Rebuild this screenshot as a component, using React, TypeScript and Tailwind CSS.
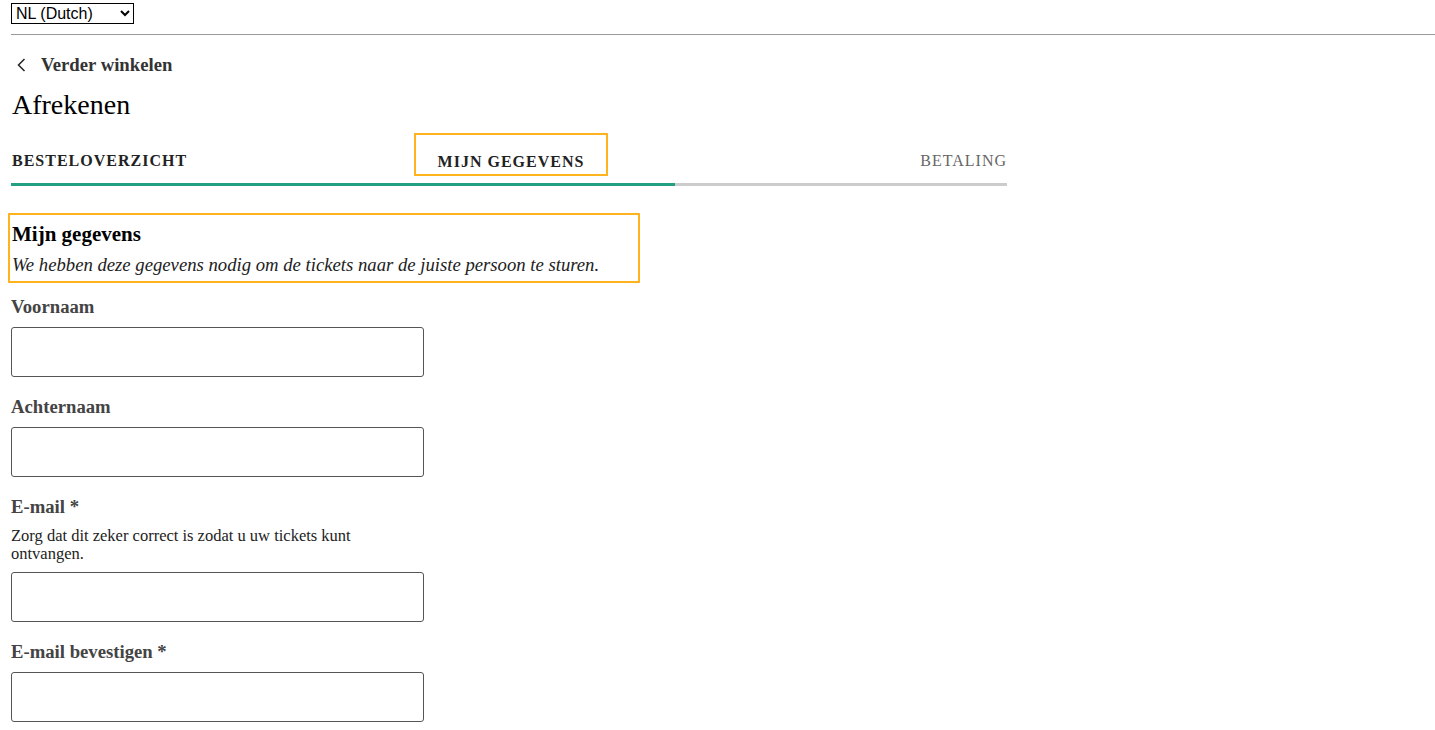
import React from "react";

const serif = { fontFamily: '"Liberation Serif", "Times New Roman", serif' };

function Field({ label, help }: { label: string; help?: string }) {
  return (
    <div className="flex flex-col">
      <label className="text-[18.7px] font-bold text-[#444] leading-[22px]">{label}</label>
      {help ? (
        <p className="mt-[9px] w-[413px] text-[16.5px] leading-[18px] text-[#222]">{help}</p>
      ) : null}
      <input
        type="text"
        className="mt-[9px] h-[50px] w-[413px] rounded-[3px] border border-[#555] bg-white"
      />
    </div>
  );
}

export default function App() {
  return (
    <div className="min-h-[730px] bg-white text-black" style={serif}>
      <div className="flex h-[24px] items-start pl-[11px] pt-[3px]">
        <select
          className="h-[21px] w-[123px] border border-black bg-white pl-0 text-[16px] leading-[19px] text-black"
          style={{ fontFamily: '"Liberation Sans", Arial, sans-serif' }}
          defaultValue="nl"
        >
          <option value="nl">NL (Dutch)</option>
        </select>
      </div>
      <div className="ml-[11px] mt-[10px] h-px bg-[#999]" />

      <div className="pl-[11px]">
        <div className="mt-[18px] flex h-[24px] items-center">
          <svg width="12" height="14" viewBox="0 0 12 14" className="ml-[5px]">
            <path d="M8.5 1 L2.5 7 L8.5 13" fill="none" stroke="#222" strokeWidth="1.5" />
          </svg>
          <span className="ml-[13px] text-[18.7px] font-bold leading-[24px] text-[#333]">Verder winkelen</span>
        </div>
        <h1 className="mt-[12px] pl-px text-[28px] font-normal leading-[32px]">Afrekenen</h1>

        <div className="w-[996px]">
          <div className="mt-[12px] flex h-[43px] items-center justify-between text-[16px] tracking-[1px]">
            <div className="w-[403px] pl-px pt-[12px] font-bold text-[#222]">BESTELOVERZICHT</div>
            <div className="flex h-[43px] w-[194px] items-center justify-center border-2 border-[#ffb31f] pt-[14px] font-bold text-[#222]">
              MIJN GEGEVENS
            </div>
            <div className="flex-1 pt-[12px] text-right font-normal text-[#666]">BETALING</div>
          </div>
          <div className="mt-[7px] flex h-[3px]">
            <div className="w-[664px] bg-[#22a082]" />
            <div className="flex-1 bg-[#cccccc]" />
          </div>
        </div>
      </div>

      <div className="ml-[8px] mt-[27px] h-[70px] w-[632px] border-2 border-[#ffb31f] px-[2px] pt-[7px]">
        <h2 className="text-[21px] font-bold leading-[24px]">Mijn gegevens</h2>
        <p className="mt-[8px] text-[18.7px] italic leading-[22px] text-[#222]">
          We hebben deze gegevens nodig om de tickets naar de juiste persoon te sturen.
        </p>
      </div>

      <div className="mt-[13px] flex flex-col gap-[19px] pl-[11px]">
        <Field label="Voornaam" />
        <Field label="Achternaam" />
        <Field label="E-mail *" help="Zorg dat dit zeker correct is zodat u uw tickets kunt ontvangen." />
        <Field label="E-mail bevestigen *" />
      </div>
    </div>
  );
}
